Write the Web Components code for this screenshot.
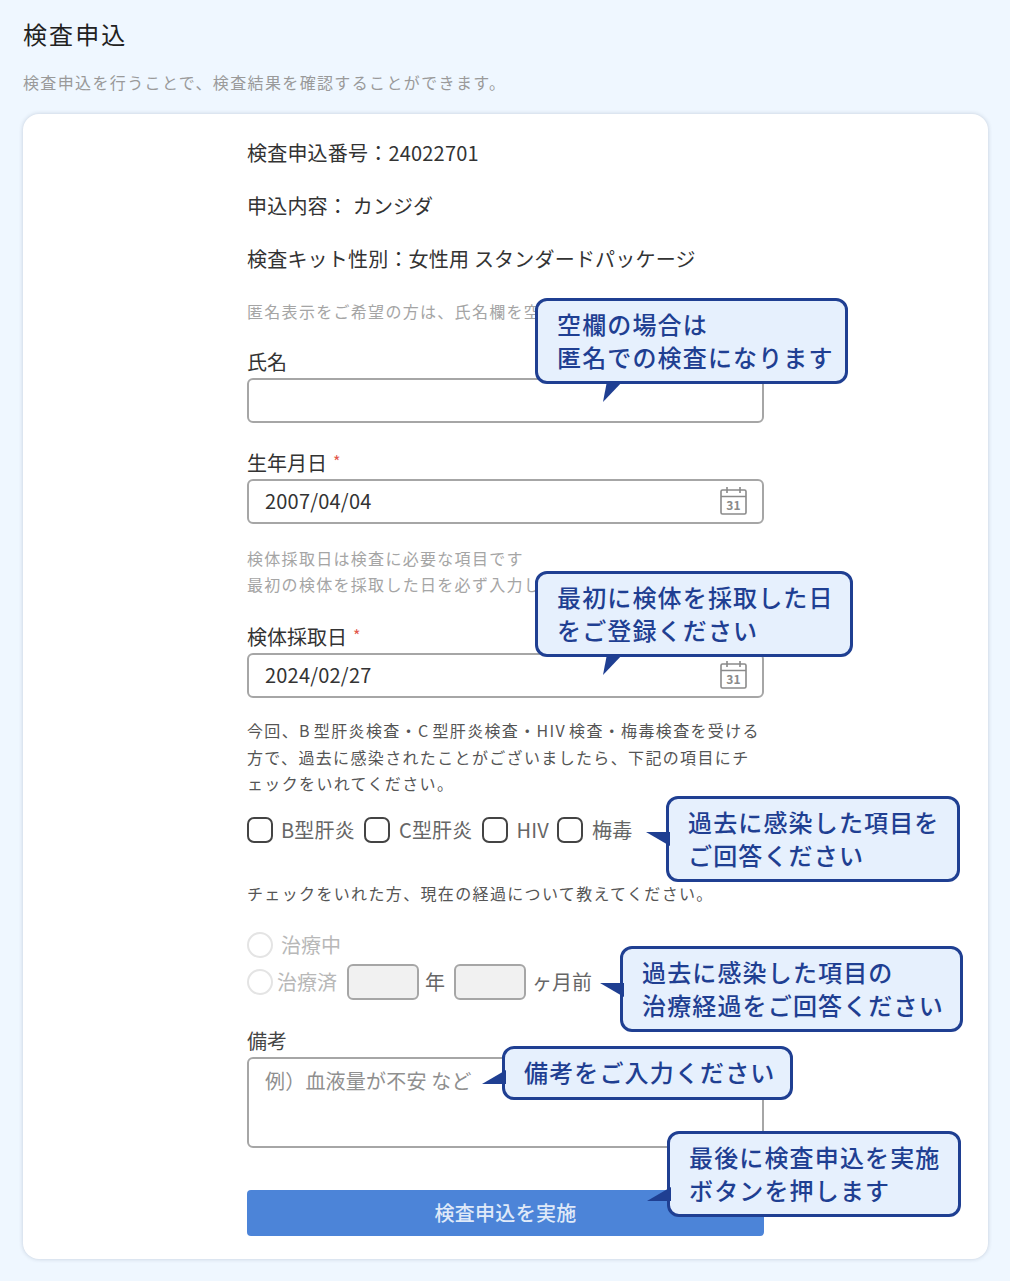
<!DOCTYPE html>
<html lang="ja">
<head>
<meta charset="utf-8">
<title>検査申込</title>
<style>
  html, body { margin: 0; background: #eff7ff; }
  body { font-family: "Noto Sans CJK JP", "Noto Sans", sans-serif; color: #333; }
</style>
</head>
<body>
<exam-page heading="検査申込" lead="検査申込を行うことで、検査結果を確認することができます。">
  <info-line>検査申込番号：24022701</info-line>
  <info-line gap="23">申込内容： カンジダ</info-line>
  <info-line gap="23">検査キット性別：女性用 スタンダードパッケージ</info-line>

  <note-text gap="24">匿名表示をご希望の方は、氏名欄を空欄にしてください</note-text>
  <form-field gap="25" label="氏名"></form-field>
  <form-field gap="27" label="生年月日" required icon>2007/04/04</form-field>

  <note-text gap="21">検体採取日は検査に必要な項目です<br>最初の検体を採取した日を必ず入力してください</note-text>
  <form-field gap="27" label="検体採取日" required icon>2024/02/27</form-field>

  <body-text gap="19" lines="26.5">今回、B 型肝炎検査・C 型肝炎検査・HIV 検査・梅毒検査を受ける<br>方で、過去に感染されたことがございましたら、下記の項目にチ<br>ェックをいれてください。</body-text>
  <check-row gap="20"></check-row>
  <body-text gap="37">チェックをいれた方、現在の経過について教えてください。</body-text>
  <treatment-rows gap="26"></treatment-rows>
  <memo-field gap="28" label="備考" placeholder="例）血液量が不安 など"></memo-field>
  <submit-button gap="42">検査申込を実施</submit-button>

  <call-out x="512" y="184" w="313" h="86" tail="bottom" style="--tx:63px">空欄の場合は<br>匿名での検査になります</call-out>
  <call-out x="512" y="457" w="318" h="86" tail="bottom" style="--tx:63px">最初に検体を採取した日<br>をご登録ください</call-out>
  <call-out x="643" y="682" w="294" h="86" tail="left" style="--ty:33px">過去に感染した項目を<br>ご回答ください</call-out>
  <call-out x="597" y="832" w="343" h="86" tail="left" style="--ty:34px">過去に感染した項目の<br>治療経過をご回答ください</call-out>
  <call-out x="479" y="932" w="291" h="54" tail="left-up" style="--ty:21px">備考をご入力ください</call-out>
  <call-out x="644" y="1017" w="294" h="86" tail="left-up" style="--ty:53px">最後に検査申込を実施<br>ボタンを押します</call-out>
</exam-page>

<script>
// small helper so each element just declares its css + markup
function shadow(el, css, html) {
  const root = el.attachShadow({mode: 'open'});
  root.innerHTML = `<style>${css}</style>${html}`;
  return root;
}

function applyGap(el) {
  if (el.hasAttribute('gap')) el.style.marginTop = el.getAttribute('gap') + 'px';
}

class ExamPage extends HTMLElement {
  connectedCallback() {
    shadow(this, `
      :host { display: block; width: 965px; padding: 16px 22px 22px 23px; font-family: "Noto Sans CJK JP", "Noto Sans", sans-serif; }
      h1 { margin: 0; font-size: 24px; line-height: 36px; font-weight: 400; letter-spacing: 2.1px; color: #222; }
      p { margin: 17px 0 19px; font-size: 16px; line-height: 26px; letter-spacing: 1.36px; color: #9a9a9a; }
      .card {
        position: relative;
        height: 1145px;
        box-sizing: border-box;
        padding: 24px 224px 23px 224px;
        display: flex;
        flex-direction: column;
        background: #fff;
        border-radius: 16px;
        box-shadow: 0 0 4px rgba(40, 60, 90, .22);
      }
    `, `
      <h1>${this.getAttribute('heading')}</h1>
      <p>${this.getAttribute('lead')}</p>
      <div class="card"><slot></slot></div>
    `);
  }
}

class InfoLine extends HTMLElement {
  connectedCallback() {
    applyGap(this);
    shadow(this, `:host { display: block; font-size: 20px; line-height: 30px; letter-spacing: .2px; color: #333; white-space: nowrap; }`, `<slot></slot>`);
  }
}

class NoteText extends HTMLElement {
  connectedCallback() {
    applyGap(this);
    shadow(this, `:host { display: block; font-size: 16px; line-height: 26px; letter-spacing: 1.3px; color: #a5a5a5; white-space: nowrap; }`, `<slot></slot>`);
  }
}

class BodyText extends HTMLElement {
  connectedCallback() {
    applyGap(this);
    const lines = this.getAttribute('lines') || 26;
    shadow(this, `:host { display: block; font-size: 16px; line-height: ${lines}px; letter-spacing: 1.35px; word-spacing: -2px; color: #555; white-space: nowrap; }`, `<slot></slot>`);
  }
}

class FormField extends HTMLElement {
  connectedCallback() {
    applyGap(this);
    const star = this.hasAttribute('required') ? '<span class="star">*</span>' : '';
    const icon = this.hasAttribute('icon') ? `
      <svg width="27" height="29" viewBox="0 0 27 29" fill="none" stroke="#8a8a8a" stroke-width="1.6">
        <rect x="1" y="4" width="25" height="24" rx="1.5"/>
        <path d="M1 10.5h25M7 1v6M20 1v6" />
        <text x="13.5" y="24" text-anchor="middle" font-size="12" font-weight="700" fill="#8a8a8a" stroke="none" font-family="Noto Sans CJK JP, sans-serif">31</text>
      </svg>` : '';
    shadow(this, `
      :host { display: block; }
      .label { font-size: 20px; line-height: 26px; color: #333; }
      .star { color: #e2574c; font-size: 16px; line-height: 0; margin-left: 6px; vertical-align: 3px; }
      .box {
        margin-top: 3px;
        height: 45px;
        box-sizing: border-box;
        padding: 0 15px 3px 16px;
        display: flex;
        align-items: center;
        justify-content: space-between;
        border: 2px solid #a6a6a6;
        border-radius: 6px;
        background: #fff;
        font-size: 20px;
        letter-spacing: .2px;
        color: #333;
      }
    `, `
      <div class="label">${this.getAttribute('label')}${star}</div>
      <div class="box"><span><slot></slot></span>${icon}</div>
    `);
  }
}

class CheckRow extends HTMLElement {
  connectedCallback() {
    applyGap(this);
    const items = [['B型肝炎', 8, 9], ['C型肝炎', 9, 9], ['HIV', 9, 8], ['梅毒', 9, 0]];
    const cells = items.map(([name, gap, after]) =>
      `<label style="gap:${gap}px;margin-right:${after}px"><i></i>${name}</label>`).join('');
    shadow(this, `
      :host { display: flex; align-items: center; height: 26px; font-size: 20px; letter-spacing: .2px; color: #666; }
      label { display: flex; align-items: center; white-space: nowrap; }
      i { display: block; width: 26px; height: 26px; box-sizing: border-box; border: 2px solid #444; border-radius: 7px; background: #fff; }
    `, cells);
  }
}

class TreatmentRows extends HTMLElement {
  connectedCallback() {
    applyGap(this);
    shadow(this, `
      :host { display: flex; flex-direction: column; gap: 6px; font-size: 20px; color: #b8b8b8; }
      .row { display: flex; align-items: center; white-space: nowrap; }
      .first { height: 26px; gap: 8px; }
      .second { height: 36px; }
      i { display: block; width: 26px; height: 26px; box-sizing: border-box; border: 2px solid #e4e4e4; border-radius: 50%; background: #fff; }
      .small { display: block; width: 72px; height: 36px; box-sizing: border-box; border: 2px solid #a6a6a6; border-radius: 6px; background: #f1f1f1; }
      .dark { color: #666; }
    `, `
      <div class="row first"><i></i><span>治療中</span></div>
      <div class="row second">
        <i></i><span style="margin:0 10px 0 4px">治療済</span>
        <b class="small"></b><span class="dark" style="margin:0 9px 0 6px">年</span>
        <b class="small"></b><span class="dark" style="margin-left:6px">ヶ月前</span>
      </div>
    `);
  }
}

class MemoField extends HTMLElement {
  connectedCallback() {
    applyGap(this);
    shadow(this, `
      :host { display: block; }
      .label { font-size: 20px; line-height: 26px; color: #444; }
      .area {
        margin-top: 3px;
        height: 91px;
        box-sizing: border-box;
        padding: 7px 16px;
        border: 2px solid #a6a6a6;
        border-radius: 6px;
        font-size: 20px;
        line-height: 30px;
        letter-spacing: .2px;
        color: #8f8f8f;
      }
    `, `
      <div class="label">${this.getAttribute('label')}</div>
      <div class="area">${this.getAttribute('placeholder')}</div>
    `);
  }
}

class SubmitButton extends HTMLElement {
  connectedCallback() {
    applyGap(this);
    shadow(this, `
      :host { display: flex; flex: none; align-items: center; justify-content: center; height: 46px; border-radius: 4px; background: #4c84d8; color: #dfe9f8; font-size: 20px; font-weight: 500; letter-spacing: .3px; }
    `, `<slot></slot>`);
  }
}

class CallOut extends HTMLElement {
  connectedCallback() {
    this.style.left = this.getAttribute('x') + 'px';
    this.style.top = this.getAttribute('y') + 'px';
    this.style.width = this.getAttribute('w') + 'px';
    this.style.height = this.getAttribute('h') + 'px';
    const tails = {
      'bottom': '<svg class="tail bottom" width="24" height="22" viewBox="0 0 24 22"><path d="M2 21 6 0h16z"/></svg>',
      'left': '<svg class="tail left" width="24" height="16" viewBox="0 0 24 16"><path d="M0 0h24v14z"/></svg>',
      'left-up': '<svg class="tail left" width="24" height="16" viewBox="0 0 24 16"><path d="M0 14 24 0v14z"/></svg>'
    };
    shadow(this, `
      :host {
        position: absolute;
        z-index: 2;
        display: block;
        box-sizing: border-box;
        padding: 6px 0 0 19px;
        border: 3px solid #1f3f92;
        border-radius: 12px;
        background: #e6f0fd;
        color: #1f3f92;
        font-size: 24px;
        line-height: 33px;
        font-weight: 500;
        letter-spacing: 1.15px;
        white-space: nowrap;
      }
      .tail { position: absolute; fill: #1f3f92; }
      .bottom { left: var(--tx); top: 100%; }
      .left { right: 100%; top: var(--ty); margin-right: -1px; }
    `, `<slot></slot>${tails[this.getAttribute('tail')]}`);
  }
}

customElements.define('exam-page', ExamPage);
customElements.define('info-line', InfoLine);
customElements.define('note-text', NoteText);
customElements.define('body-text', BodyText);
customElements.define('form-field', FormField);
customElements.define('check-row', CheckRow);
customElements.define('treatment-rows', TreatmentRows);
customElements.define('memo-field', MemoField);
customElements.define('submit-button', SubmitButton);
customElements.define('call-out', CallOut);
</script>
</body>
</html>
